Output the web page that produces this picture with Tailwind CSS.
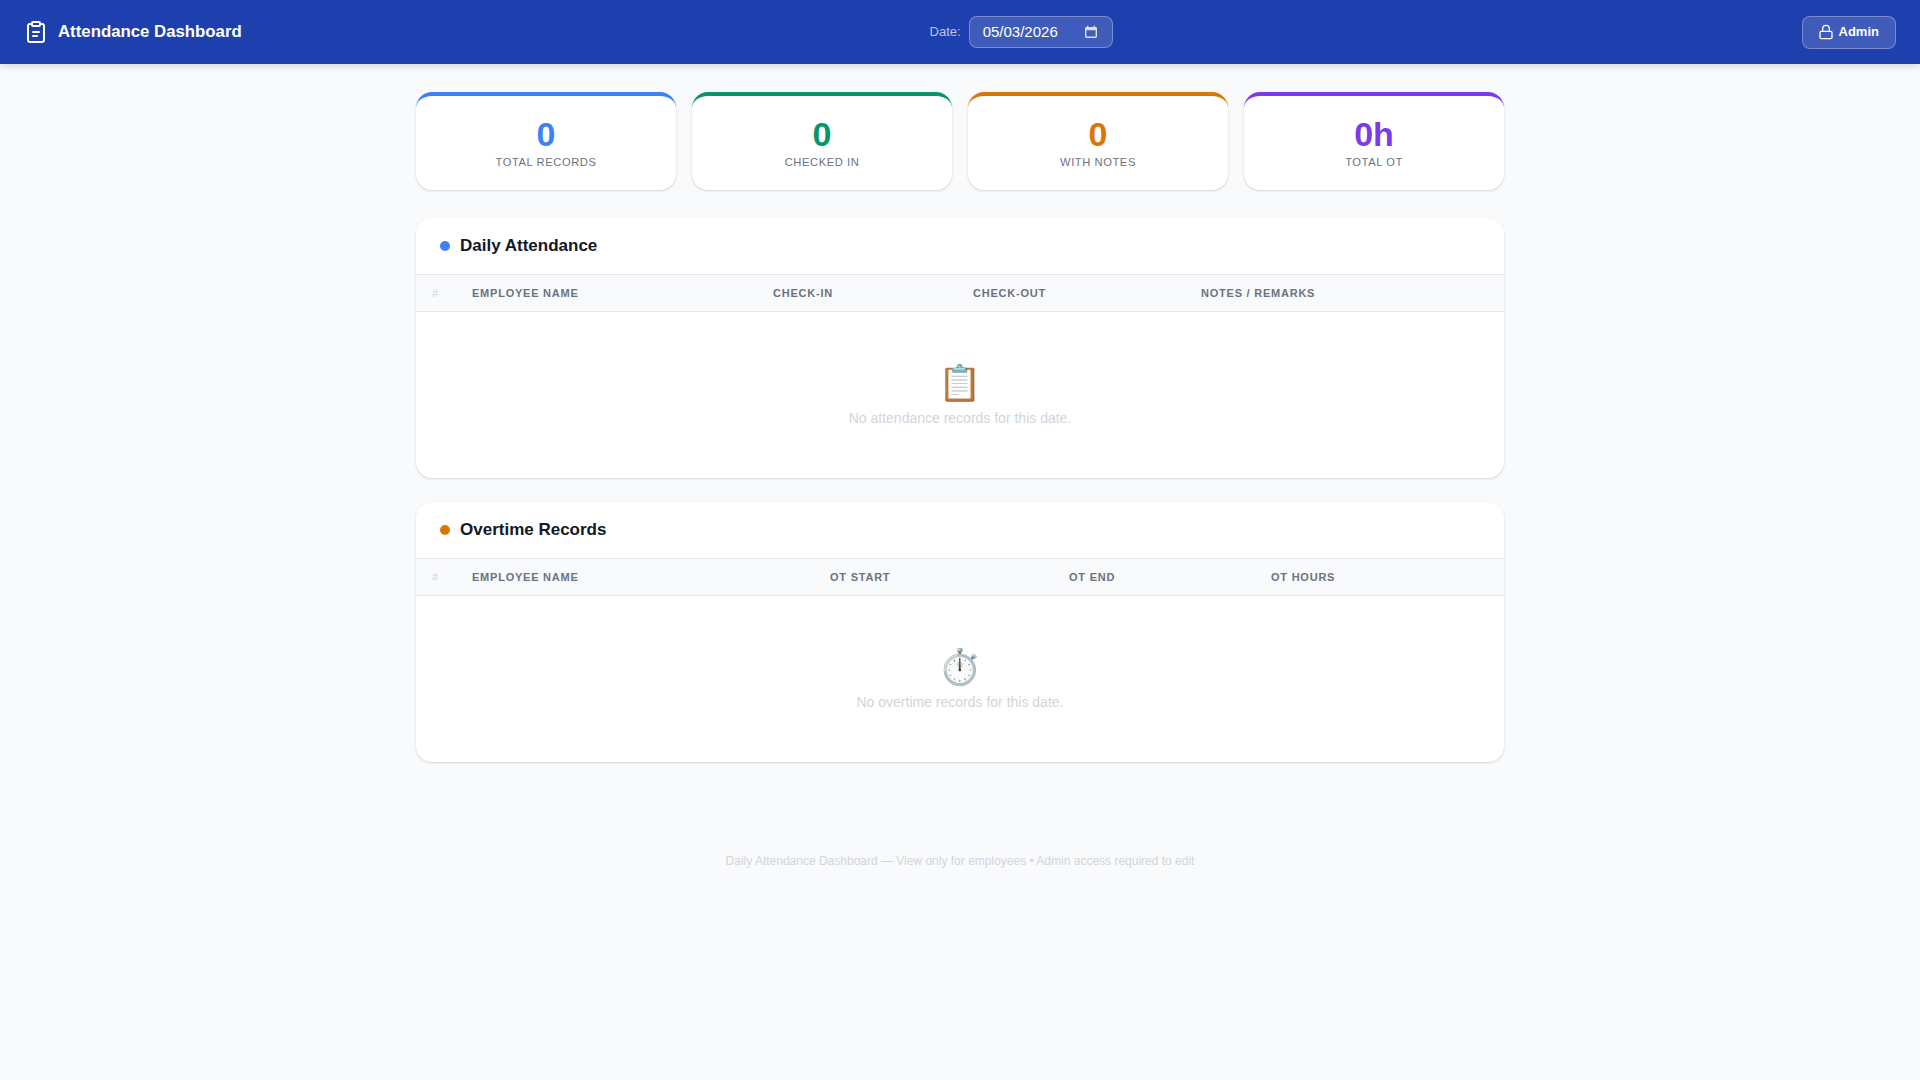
<!DOCTYPE html>
<html lang="en">
<head>
    <meta charset="UTF-8">
    <meta name="viewport" content="width=device-width, initial-scale=1.0">
    <title>Attendance Dashboard</title>
    <script src="https://cdn.jsdelivr.net/npm/@tailwindcss/browser@4"></script>
</head>
<body class="bg-[#f9fafb] min-h-screen font-['Liberation_Sans',sans-serif] text-[#111827]">

    <!-- Header -->
    <header class="bg-[#1e40af] h-16 px-6 flex items-center justify-between shadow-[0_2px_8px_rgba(0,0,0,0.15)] relative">
        <div class="flex items-center gap-2.5">
            <svg class="w-6 h-6 text-white" fill="none" stroke="currentColor" stroke-width="2" stroke-linecap="round" stroke-linejoin="round" viewBox="0 0 24 24">
                <rect x="8" y="2" width="8" height="4" rx="1"/>
                <path d="M16 4h2a2 2 0 0 1 2 2v14a2 2 0 0 1-2 2H6a2 2 0 0 1-2-2V6a2 2 0 0 1 2-2h2"/>
                <path d="M9 12h6M9 16h4"/>
            </svg>
            <h1 class="text-[16.8px] font-bold text-white">Attendance Dashboard</h1>
        </div>
        <div class="flex items-center gap-2 mr-px">
            <label class="text-[13px] text-white/70">Date:</label>
            <div class="w-[144px] h-8 pl-[13px] pr-[14px] flex items-center justify-between rounded-lg border border-white/30 bg-white/15 text-[15px] text-white">
                <span>05/03/2026</span>
                <svg class="w-3.5 h-3.5 text-white/80" viewBox="0 0 14 14" fill="currentColor"><path fill-rule="evenodd" d="M3 0.8h1.4V2h5.2V0.8H11V2h.6A1.4 1.4 0 0 1 13 3.4v8.2A1.4 1.4 0 0 1 11.6 13H2.4A1.4 1.4 0 0 1 1 11.6V3.4A1.4 1.4 0 0 1 2.4 2H3zM2.4 5.2v6.4h9.2V5.2z"/></svg>
            </div>
        </div>
        <button class="h-[33px] pl-[15px] pr-4 flex items-center gap-[5px] rounded-lg border border-white/30 bg-white/15 text-[13px] font-bold text-white">
            <svg class="w-4 h-4" fill="none" stroke="currentColor" stroke-width="2" stroke-linecap="round" stroke-linejoin="round" viewBox="0 0 24 24">
                <rect x="3" y="11" width="18" height="11" rx="2"/>
                <path d="M7 11V7a5 5 0 0 1 10 0v4"/>
            </svg>
            Admin
        </button>
    </header>

    <main class="w-[1088px] mx-auto pt-7">

        <!-- Stat cards -->
        <div class="grid grid-cols-4 gap-4 mb-7">
            <div class="h-[98px] bg-white rounded-2xl border-t-4 border-[#3b82f6] shadow-[0_1px_3px_rgba(0,0,0,0.1),0_1px_2px_rgba(0,0,0,0.06)] text-center pt-[18px]">
                <div class="text-[34px] leading-10 font-bold text-[#3b82f6]">0</div>
                <div class="text-[11.2px] tracking-[0.56px] text-[#6b7280]">TOTAL RECORDS</div>
            </div>
            <div class="h-[98px] bg-white rounded-2xl border-t-4 border-[#059669] shadow-[0_1px_3px_rgba(0,0,0,0.1),0_1px_2px_rgba(0,0,0,0.06)] text-center pt-[18px]">
                <div class="text-[34px] leading-10 font-bold text-[#059669]">0</div>
                <div class="text-[11.2px] tracking-[0.56px] text-[#6b7280]">CHECKED IN</div>
            </div>
            <div class="h-[98px] bg-white rounded-2xl border-t-4 border-[#d97706] shadow-[0_1px_3px_rgba(0,0,0,0.1),0_1px_2px_rgba(0,0,0,0.06)] text-center pt-[18px]">
                <div class="text-[34px] leading-10 font-bold text-[#d97706]">0</div>
                <div class="text-[11.2px] tracking-[0.56px] text-[#6b7280]">WITH NOTES</div>
            </div>
            <div class="h-[98px] bg-white rounded-2xl border-t-4 border-[#7c3aed] shadow-[0_1px_3px_rgba(0,0,0,0.1),0_1px_2px_rgba(0,0,0,0.06)] text-center pt-[18px]">
                <div class="text-[34px] leading-10 font-bold text-[#7c3aed]">0h</div>
                <div class="text-[11.2px] tracking-[0.56px] text-[#6b7280]">TOTAL OT</div>
            </div>
        </div>

        <!-- Daily Attendance -->
        <section class="h-[260px] bg-white rounded-2xl shadow-[0_1px_3px_rgba(0,0,0,0.1),0_1px_2px_rgba(0,0,0,0.06)] mb-6 overflow-hidden">
            <div class="h-14 px-6 flex items-center gap-2.5">
                <span class="w-2.5 h-2.5 rounded-full bg-[#3b82f6]"></span>
                <h2 class="text-[17px] font-bold">Daily Attendance</h2>
            </div>
            <table class="w-full table-fixed">
                <thead>
                    <tr class="h-[37px] bg-[#f9fafb] border-y border-[#e5e7eb] text-left text-[11px] tracking-[0.77px] text-[#6b7280]">
                        <th class="w-10 pl-4 font-normal text-[#d1d5db]">#</th>
                        <th class="w-[301px] pl-4 font-bold">EMPLOYEE NAME</th>
                        <th class="w-[200px] pl-4 font-bold">CHECK-IN</th>
                        <th class="w-[228px] pl-4 font-bold">CHECK-OUT</th>
                        <th class="pl-4 font-bold">NOTES / REMARKS</th>
                    </tr>
                </thead>
            </table>
            <div class="pt-[50px] text-center">
                <div class="text-[35px] leading-[42px]">📋</div>
                <p class="text-sm text-[#d1d5db] mt-1">No attendance records for this date.</p>
            </div>
        </section>

        <!-- Overtime Records -->
        <section class="h-[260px] bg-white rounded-2xl shadow-[0_1px_3px_rgba(0,0,0,0.1),0_1px_2px_rgba(0,0,0,0.06)] overflow-hidden">
            <div class="h-14 px-6 flex items-center gap-2.5">
                <span class="w-2.5 h-2.5 rounded-full bg-[#d97706]"></span>
                <h2 class="text-[17px] font-bold">Overtime Records</h2>
            </div>
            <table class="w-full table-fixed">
                <thead>
                    <tr class="h-[37px] bg-[#f9fafb] border-y border-[#e5e7eb] text-left text-[11px] tracking-[0.77px] text-[#6b7280]">
                        <th class="w-10 pl-4 font-normal text-[#d1d5db]">#</th>
                        <th class="w-[358px] pl-4 font-bold">EMPLOYEE NAME</th>
                        <th class="w-[239px] pl-4 font-bold">OT START</th>
                        <th class="w-[202px] pl-4 font-bold">OT END</th>
                        <th class="pl-4 font-bold">OT HOURS</th>
                    </tr>
                </thead>
            </table>
            <div class="pt-[50px] text-center">
                <div class="text-[35px] leading-[42px]">⏱️</div>
                <p class="text-sm text-[#d1d5db] mt-1">No overtime records for this date.</p>
            </div>
        </section>

        <footer class="mt-[91px] text-center text-xs text-[#d1d5db]">
            Daily Attendance Dashboard — View only for employees • Admin access required to edit
        </footer>
    </main>

</body>
</html>
